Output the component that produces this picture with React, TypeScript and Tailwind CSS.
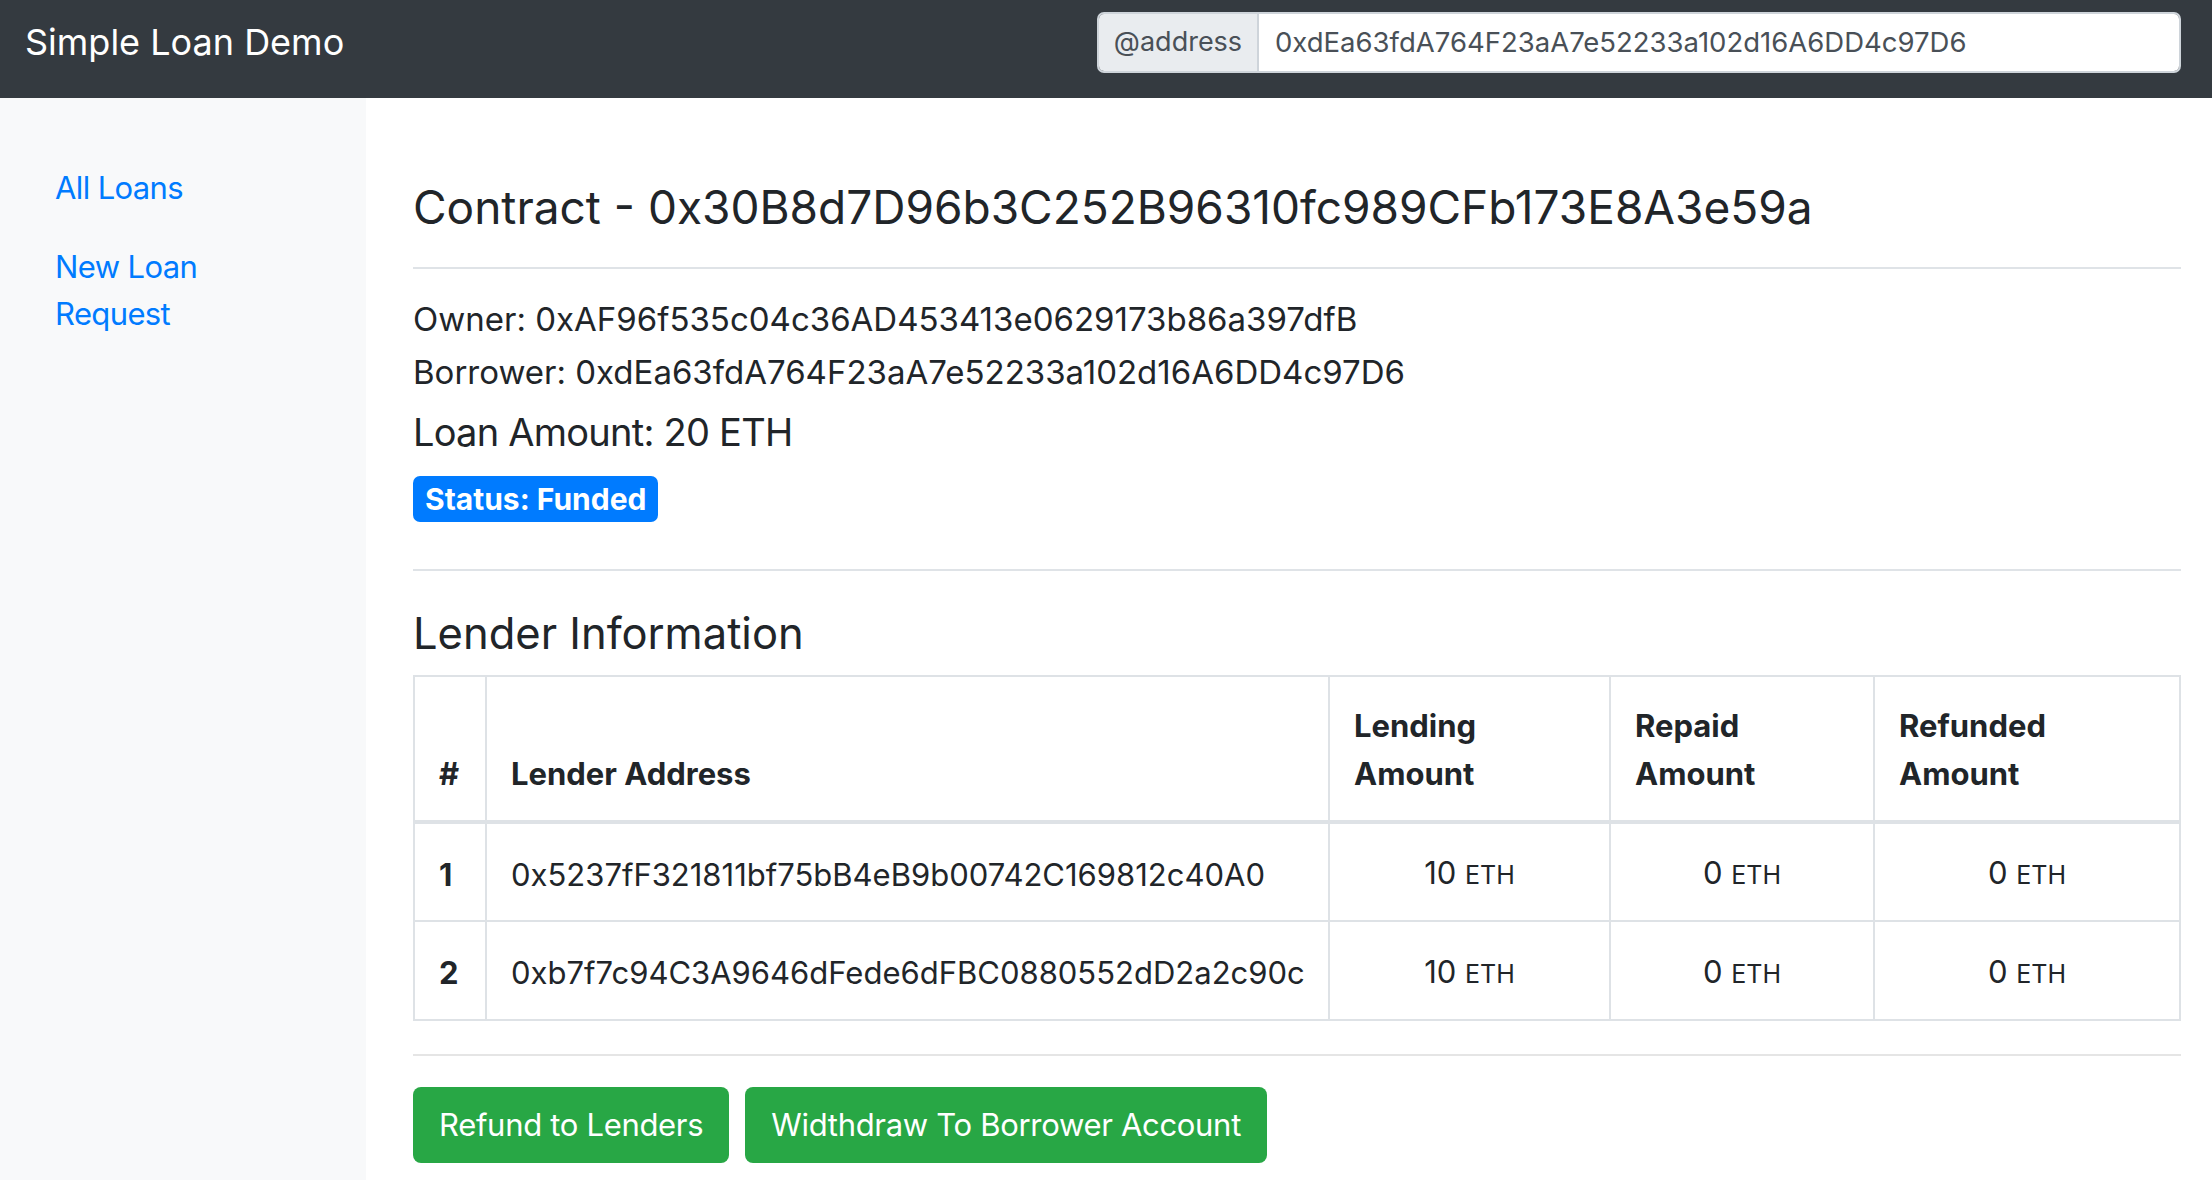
import React from "react";

// --- Data ---
interface Lender {
  id: number;
  address: string;
  lent: number;
  repaid: number;
  refunded: number;
}

const lenders: Lender[] = [
  {
    id: 1,
    address: "0x5237fF321811bf75bB4eB9b00742C169812c40A0",
    lent: 10,
    repaid: 0,
    refunded: 0,
  },
  {
    id: 2,
    address: "0xb7f7c94C3A9646dFede6dFBC0880552dD2a2c90c",
    lent: 10,
    repaid: 0,
    refunded: 0,
  },
];

// --- Components ---
const Eth: React.FC<{ value: number }> = ({ value }) => (
  <span>
    {value} <small className="text-[25px]">ETH</small>
  </span>
);

const Navbar: React.FC = () => (
  <nav className="h-[98px] bg-[#343a40] flex items-start">
    <a className="pl-[25px] pt-[15px] text-[36px] leading-[54px] text-white">
      Simple Loan Demo
    </a>
    <div className="ml-auto mr-[31px] mt-[12px] h-[61px] w-[1084px] flex rounded-[7px] overflow-hidden border-2 border-[#ced4da]">
      <span className="w-[160px] bg-[#e9ecef] border-r-2 border-[#ced4da] flex items-center justify-center text-[27px] text-[#495057]">
        @address
      </span>
      <input
        className="flex-1 bg-white px-[16px] text-[27.5px] text-[#495057] outline-none"
        defaultValue="0xdEa63fdA764F23aA7e52233a102d16A6DD4c97D6"
      />
    </div>
  </nav>
);

const Sidebar: React.FC = () => (
  <aside className="w-[366px] shrink-0 bg-[#f8f9fa] min-h-[1082px] pl-[55px] pr-6 pt-[66px]">
    <ul className="flex flex-col gap-[32px] text-[31px] leading-[47px] text-[#007bff] tracking-[-0.02em]">
      <li>All Loans</li>
      <li>
        New Loan
        <br />
        Request
      </li>
    </ul>
  </aside>
);

const App: React.FC = () => {
  return (
    <div className="min-h-screen bg-white text-[#212529] font-['Inter',sans-serif]">
      <Navbar />
      <div className="flex">
        <Sidebar />
        <main className="flex-1 pl-[47px] pr-[31px]">
          {/* Contract header */}
          <h3 className="mt-[83px] text-[46px] leading-[53px]">
            Contract - 0x30B8d7D96b3C252B96310fc989CFb173E8A3e59a
          </h3>
          <hr className="mt-[33px] border-t-2 border-[#dfe3e7]" />

          <div className="mt-[32px] text-[33px] leading-[36px]">
            Owner: 0xAF96f535c04c36AD453413e0629173b86a397dfB
          </div>
          <div className="mt-[17px] text-[33px] leading-[36px]">
            Borrower: 0xdEa63fdA764F23aA7e52233a102d16A6DD4c97D6
          </div>
          <div className="mt-[19px] text-[38px] leading-[46px] tracking-[-0.02em]">
            Loan Amount: 20 ETH
          </div>
          <div className="mt-[21px]">
            <span className="inline-flex items-center h-[46px] px-[12px] rounded-[7px] bg-[#007bff] text-white text-[30px] font-bold">
              Status: Funded
            </span>
          </div>
          <hr className="mt-[47px] border-t-2 border-[#dfe3e7]" />

          {/* Lenders */}
          <h4 className="mt-[39px] text-[43.5px] leading-[46px]">
            Lender Information
          </h4>
          <table className="mt-[19px] w-full border-collapse table-fixed text-[31px] leading-[47px]">
            <colgroup>
              <col className="w-[72px]" />
              <col className="w-[843px]" />
              <col className="w-[281px]" />
              <col className="w-[264px]" />
              <col className="w-[306px]" />
            </colgroup>
            <thead>
              <tr className="h-[146px]">
                {["#", "Lender Address", "Lending Amount", "Repaid Amount", "Refunded Amount"].map(
                  (h, i) => (
                    <th
                      key={h}
                      className="border-2 border-b-4 border-[#dee2e6] align-bottom text-left font-bold leading-[48px] px-[24px] pb-[22px]"
                    >
                      {i >= 2 ? (
                        <>
                          {h.split(" ")[0]}
                          <br />
                          {h.split(" ")[1]}
                        </>
                      ) : (
                        h
                      )}
                    </th>
                  )
                )}
              </tr>
            </thead>
            <tbody>
              {lenders.map((l) => (
                <tr key={l.id} className="h-[99px]">
                  <th className="border-2 border-[#dee2e6] text-left font-bold px-[24px] pt-[4px]">
                    {l.id}
                  </th>
                  <td className="border-2 border-[#dee2e6] px-[24px] pt-[4px]">
                    {l.address}
                  </td>
                  <td className="border-2 border-[#dee2e6] text-center pt-[4px]">
                    <Eth value={l.lent} />
                  </td>
                  <td className="border-2 border-[#dee2e6] text-center pt-[4px]">
                    <Eth value={l.repaid} />
                  </td>
                  <td className="border-2 border-[#dee2e6] text-center pt-[4px]">
                    <Eth value={l.refunded} />
                  </td>
                </tr>
              ))}
            </tbody>
          </table>
          <hr className="mt-[33px] border-t-2 border-[#e5e5e5]" />

          {/* Actions */}
          <div className="mt-[31px] flex gap-[16px]">
            <button className="h-[76px] px-[26px] rounded-[8px] bg-[#28a745] text-white text-[31px] tracking-[-0.01em]">
              Refund to Lenders
            </button>
            <button className="h-[76px] px-[26px] rounded-[8px] bg-[#28a745] text-white text-[31px] tracking-[-0.01em]">
              Widthdraw To Borrower Account
            </button>
          </div>
        </main>
      </div>
    </div>
  );
};

export default App;
